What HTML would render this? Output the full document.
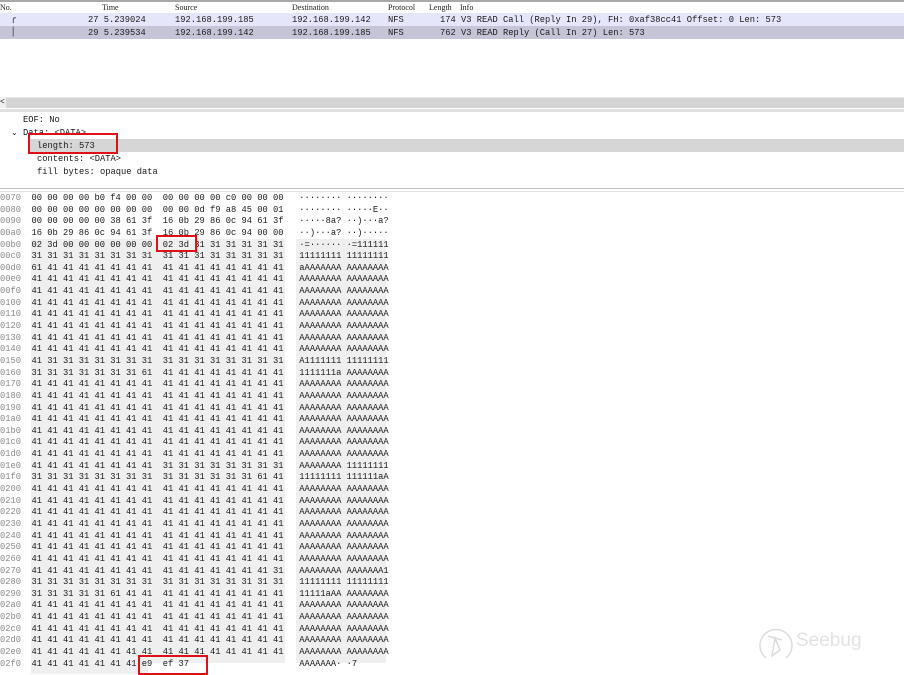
<!DOCTYPE html>
<html><head><meta charset="utf-8">
<style>
*{margin:0;padding:0;box-sizing:border-box}
body{width:904px;height:672px;overflow:hidden;background:#fff;position:relative;font-family:"Liberation Mono",monospace;font-size:8.75px;color:#1a1a1a}
.a{position:absolute;white-space:pre}
.hdr{font-family:"Liberation Serif",serif;font-size:8px;color:#222}
.row{position:absolute;left:0;width:904px;height:13px}
.hx{position:absolute;left:0;top:193px}
.hx div{height:11.65px;line-height:11.65px;white-space:pre}
.o{color:#8a8a8a}
.box{position:absolute;border:2px solid #e0101a}
</style></head><body>
<div class="a" style="left:0;top:0;width:904px;height:2px;background:#a8a8a8"></div>
<div class="a hdr" style="left:0;top:3px">No.</div>
<div class="a hdr" style="left:102px;top:3px">Time</div>
<div class="a hdr" style="left:175px;top:3px">Source</div>
<div class="a hdr" style="left:292px;top:3px">Destination</div>
<div class="a hdr" style="left:388px;top:3px">Protocol</div>
<div class="a hdr" style="left:429px;top:3px">Length</div>
<div class="a hdr" style="left:460px;top:3px">Info</div>
<div class="row" style="top:13px;background:#e6e6fb"></div>
<div class="row" style="top:26px;background:#c6c5d8"></div>
<div class="a" style="left:0;top:14px">  ╭</div>
<div class="a" style="left:0;top:27px">  │</div>
<div class="a" style="left:88px;top:15px">27 5.239024</div>
<div class="a" style="left:88px;top:28px">29 5.239534</div>
<div class="a" style="left:175px;top:15px">192.168.199.185</div>
<div class="a" style="left:175px;top:28px">192.168.199.142</div>
<div class="a" style="left:292px;top:15px">192.168.199.142</div>
<div class="a" style="left:292px;top:28px">192.168.199.185</div>
<div class="a" style="left:388px;top:15px">NFS</div>
<div class="a" style="left:388px;top:28px">NFS</div>
<div class="a" style="left:440px;top:15px">174 V3 READ Call (Reply In 29), FH: 0xaf38cc41 Offset: 0 Len: 573</div>
<div class="a" style="left:440px;top:28px">762 V3 READ Reply (Call In 27) Len: 573</div>
<div class="a" style="left:0;top:97px;width:904px;height:11px;background:#d4d4d4;border-top:1px solid #e8e8e8"></div>
<div class="a" style="left:0;top:97px;width:6px;height:11px;background:#f0f0f0;font-size:8px;line-height:11px">&lt;</div>
<div class="a" style="left:0;top:109px;width:904px;height:3px;background:#e0e0e0"></div>
<div class="a" style="left:23px;top:115px">EOF: No</div>
<div class="a" style="left:11px;top:128px;font-family:'DejaVu Sans';font-size:8px">⌄</div>
<div class="a" style="left:23px;top:128px">Data: &lt;DATA&gt;</div>
<div class="a" style="left:30px;top:139px;width:874px;height:13px;background:#d6d6d6"></div>
<div class="a" style="left:37px;top:141px">length: 573</div>
<div class="a" style="left:37px;top:154px">contents: &lt;DATA&gt;</div>
<div class="a" style="left:37px;top:167px">fill bytes: opaque data</div>
<div class="box" style="left:28px;top:133px;width:90px;height:21px"></div>
<div class="a" style="left:0;top:188px;width:904px;height:1px;background:#c0c0c0"></div>
<div class="a" style="left:0;top:191px;width:904px;height:1px;background:#e0e0e0"></div>
<div class="a" style="left:31px;top:239px;width:254px;height:424px;background:#efefef"></div>
<div class="a" style="left:296px;top:239px;width:90px;height:424px;background:#efefef"></div>
<div class="a" style="left:31px;top:663px;width:117px;height:11px;background:#efefef"></div>
<div class="hx" id="hx"></div>
<div class="box" style="left:156px;top:235px;width:41px;height:17px"></div>
<div class="box" style="left:138px;top:655px;width:70px;height:20px"></div>
<svg class="a" style="left:756px;top:622px" width="40" height="44" viewBox="0 0 40 44"><g fill="none" stroke="#dcdcdc" stroke-width="1.5"><path d="M10 36 A16 16 0 1 1 30 36"/><path d="M12 14 L26 18 M19 16 L16 34 L24 28 Z"/></g></svg>
<div class="a" style="left:796px;top:630px;font-family:'Liberation Sans',sans-serif;font-size:19px;color:#e2e2e2">Seebug</div>
<script>
var rows=[
["0070","00 00 00 00 b0 f4 00 00","00 00 00 00 c0 00 00 00","········ ········"],
["0080","00 00 00 00 00 00 00 00","00 00 0d f9 a8 45 00 01","········ ·····E··"],
["0090","00 00 00 00 00 38 61 3f","16 0b 29 86 0c 94 61 3f","·····8a? ··)···a?"],
["00a0","16 0b 29 86 0c 94 61 3f","16 0b 29 86 0c 94 00 00","··)···a? ··)·····"],
["00b0","02 3d 00 00 00 00 00 00","02 3d 31 31 31 31 31 31","·=······ ·=111111"]];
var A="41 41 41 41 41 41 41 41",O="31 31 31 31 31 31 31 31",AA="AAAAAAAA",OO="11111111";
function r(o,a,b,c){rows.push([o,a,b,c]);}
r("00c0",O,O,OO+" "+OO);
r("00d0","61 41 41 41 41 41 41 41",A,"a"+"AAAAAAA "+AA);
["00e0","00f0","0100","0110","0120","0130","0140"].forEach(function(o){r(o,A,A,AA+" "+AA)});
r("0150","41 31 31 31 31 31 31 31",O,"A1111111 "+OO);
r("0160","31 31 31 31 31 31 31 61",A,"1111111a "+AA);
["0170","0180","0190","01a0","01b0","01c0","01d0"].forEach(function(o){r(o,A,A,AA+" "+AA)});
r("01e0",A,O,AA+" "+OO);
r("01f0",O,"31 31 31 31 31 31 61 41",OO+" 111111aA");
["0200","0210","0220","0230","0240","0250","0260"].forEach(function(o){r(o,A,A,AA+" "+AA)});
r("0270",A,"41 41 41 41 41 41 41 31",AA+" AAAAAAA1");
r("0280",O,O,OO+" "+OO);
r("0290","31 31 31 31 31 61 41 41",A,"11111aAA "+AA);
["02a0","02b0","02c0","02d0","02e0"].forEach(function(o){r(o,A,A,AA+" "+AA)});
r("02f0","41 41 41 41 41 41 41 e9","ef 37                  ","AAAAAAA· ·7");
var h="";rows.forEach(function(x){h+='<div><span class="o">'+x[0]+'</span>  '+x[1]+'  '+x[2]+'   '+x[3]+'</div>'});
document.getElementById("hx").innerHTML=h;
</script>
</body></html>
